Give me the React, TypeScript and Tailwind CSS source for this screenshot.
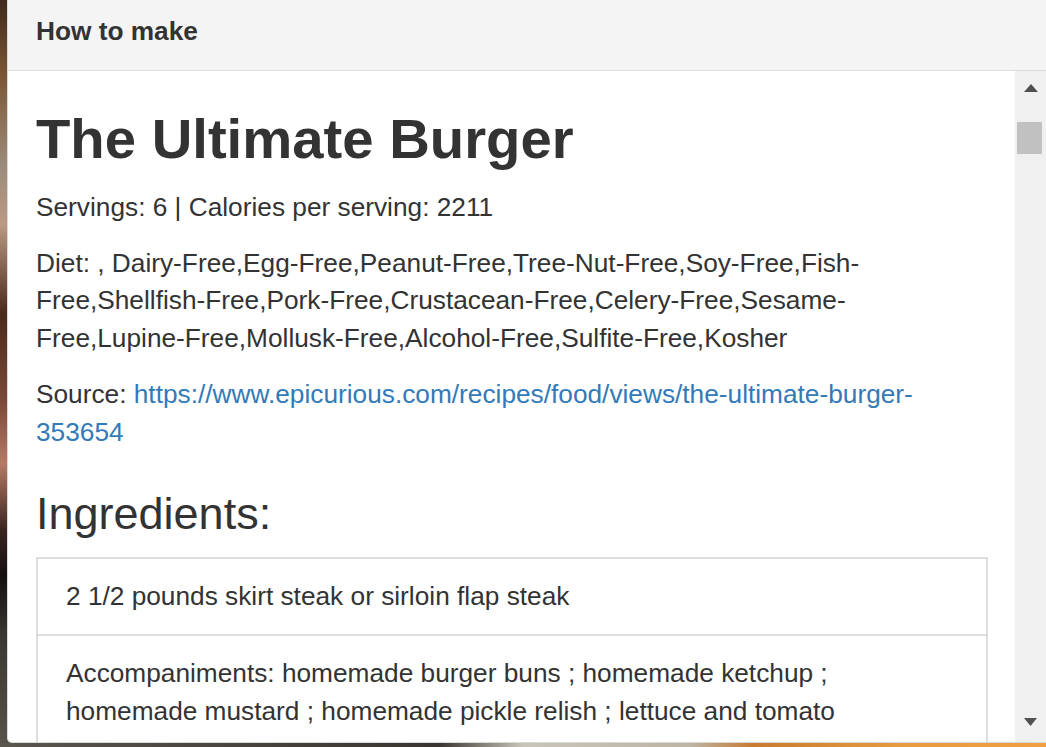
export default function App() {
  const ingredients = [
    '2 1/2 pounds skirt steak or sirloin flap steak',
    'Accompaniments: homemade burger buns ; homemade ketchup ; homemade mustard ; homemade pickle relish ; lettuce and tomato',
  ];

  return (
    <div
      className="flex h-[747px] w-[1046px] flex-col overflow-hidden bg-[linear-gradient(to_bottom,#3f2a1c_0%,#7a5535_10%,#9b8a7a_22%,#b99a85_30%,#4a2a1c_42%,#7c4a3a_54%,#b57a66_62%,#3a2420_71%,#141010_77%,#3a3631_85%,#57534a_100%)] pl-[7px] font-['Liberation_Sans',Arial,sans-serif] text-[#333]"
    >
      {/* panel */}
      <div className="flex min-h-0 flex-1 flex-col overflow-hidden rounded-bl-[5px] border-b border-l border-[#d8d8d8] bg-white">
        <div className="flex h-[71px] shrink-0 items-center border-b border-[#ddd] bg-[#f4f4f4] px-[28px] pb-[6px]">
          <h3 className="text-[26.25px] font-bold leading-[37.5px]">How to make</h3>
        </div>

        <div className="flex min-h-0 flex-1">
          {/* body */}
          <div className="min-w-0 flex-1 overflow-hidden pl-[28px] pr-[27px]">
            <h1 className="mt-[37px] mb-[18.75px] text-[56.25px] font-bold leading-[1.1]">The Ultimate Burger</h1>
            <p className="mb-[18.75px] text-[26.25px] leading-[37.5px]">Servings: 6 | Calories per serving: 2211</p>
            <p className="mb-[18.75px] text-[26.25px] leading-[37.5px]">
              Diet: , Dairy-Free,Egg-Free,Peanut-Free,Tree-Nut-Free,Soy-Free,Fish-Free,Shellfish-Free,Pork-Free,Crustacean-Free,Celery-Free,Sesame-Free,Lupine-Free,Mollusk-Free,Alcohol-Free,Sulfite-Free,Kosher
            </p>
            <p className="mb-[18.75px] text-[26.25px] leading-[37.5px]">
              Source:{' '}
              <a href="#" className="text-[#337ab7]">
                https://www.epicurious.com/recipes/food/views/the-ultimate-burger-353654
              </a>
            </p>
            <h2 className="mt-[38px] mb-[18.75px] text-[45px] leading-[1.1]">Ingredients:</h2>
            <ul className="border-2 border-[#ddd]">
              {ingredients.map((item, i) => (
                <li
                  key={i}
                  className="border-t-2 border-[#ddd] px-[28px] py-[18.75px] text-[26.25px] leading-[37.5px] first:border-t-0"
                >
                  {item}
                </li>
              ))}
            </ul>
          </div>

          {/* scrollbar */}
          <div className="relative flex w-[31px] shrink-0 flex-col items-center bg-[#f0f0f0]">
            <svg width="14" height="8" viewBox="0 0 14 8" className="mt-[13px]">
              <path d="M7 0 L14 8 L0 8 Z" fill="#505050" />
            </svg>
            <div className="mt-[30px] ml-[-3px] h-[32px] w-[25px] bg-[#c1c1c1]" />
            <svg width="13" height="8" viewBox="0 0 13 8" className="mt-auto mb-[16px]">
              <path d="M0 0 L13 0 L6.5 8 Z" fill="#505050" />
            </svg>
          </div>
        </div>
      </div>
      <div className="h-[4px] shrink-0 ml-[-7px] bg-[linear-gradient(to_right,#5a554d_0%,#3a3530_42%,#c9c5b9_50%,#bdb5a5_66%,#c87a30_72%,#e89a40_86%,#f0a040_100%)]" />
    </div>
  );
}
